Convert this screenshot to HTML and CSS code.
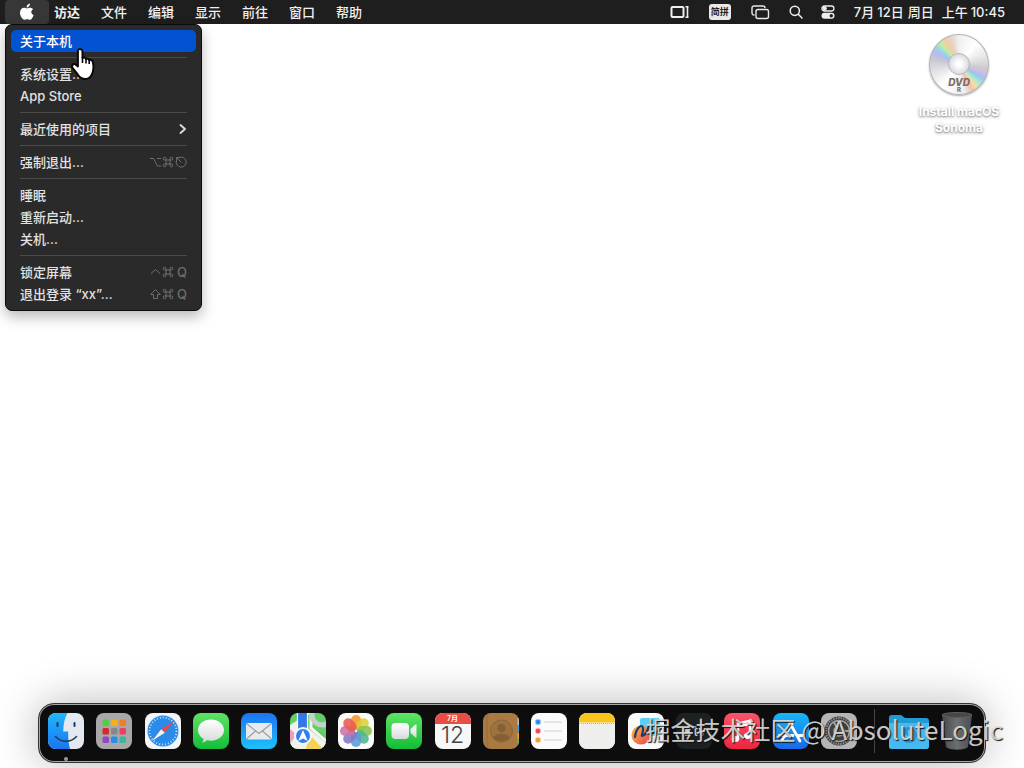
FILE: index.html
```html
<!DOCTYPE html>
<html lang="zh-CN">
<head>
<meta charset="utf-8">
<title>桌面</title>
<link rel="stylesheet" href="styles.css">
</head>
<body>
<svg class="defs" aria-hidden="true">
  <defs>
    <linearGradient id="g-blue" x1="0" y1="0" x2="0" y2="1"><stop offset="0" stop-color="#1d73f2"/><stop offset="1" stop-color="#1bc3fb"/></linearGradient>
    <linearGradient id="g-green" x1="0" y1="0" x2="0" y2="1"><stop offset="0" stop-color="#5fe365"/><stop offset="1" stop-color="#13bd37"/></linearGradient>
    <linearGradient id="g-finder" x1="0" y1="0" x2="0" y2="1"><stop offset="0" stop-color="#20b7fb"/><stop offset="1" stop-color="#1a76f2"/></linearGradient>
    <linearGradient id="g-white" x1="0" y1="0" x2="0" y2="1"><stop offset="0" stop-color="#fff"/><stop offset="1" stop-color="#d5dbd9"/></linearGradient>
    <linearGradient id="g-store" x1="0" y1="0" x2="0" y2="1"><stop offset="0" stop-color="#18b6fa"/><stop offset="1" stop-color="#1669e8"/></linearGradient>
    <linearGradient id="g-music" x1="0" y1="0" x2="0" y2="1"><stop offset="0" stop-color="#fb5368"/><stop offset="1" stop-color="#ee2540"/></linearGradient>
    <linearGradient id="g-trash" x1="0" y1="0" x2="1" y2="0"><stop offset="0" stop-color="#47494b"/><stop offset=".5" stop-color="#6c6f71"/><stop offset="1" stop-color="#4b4d50"/></linearGradient>
    <linearGradient id="g-free" x1="0" y1="0" x2="1" y2="1"><stop offset="0" stop-color="#ffba45"/><stop offset="1" stop-color="#e8434f"/></linearGradient>
    <symbol id="cmd" viewBox="0 0 12 12"><path d="M4 4h4v4H4zM4 4H2.800A1.400 1.400 0 1 1 4 2.800zM8 4V2.800A1.400 1.400 0 1 1 9.200 4zM8 8h1.200A1.400 1.400 0 1 1 8 9.200zM4 8v1.200A1.400 1.400 0 1 1 2.800 8z" fill="none" stroke="currentColor"/></symbol>
  </defs>
</svg>

<div class="screen">
  <header class="menubar">
    <nav class="menus" aria-label="菜单栏">
      <button class="apple" aria-label="苹果菜单">
        <svg width="16" height="18" viewBox="0 0 16 18" fill="#fff"><path d="M10.900 .6c.1 1.300-.4 2.200-1 2.900-.6.700-1.400 1.100-2.300 1.100-.1-1.100.4-2.100 1-2.800.6-.7 1.500-1.100 2.300-1.200zM14.100 6.200c-1.200.8-1.800 1.700-1.800 2.900 0 1.400.8 2.500 2.300 3.100-.5 1.500-1.200 2.700-2.100 3.700-.5.600-1.100.9-1.800.9-.9 0-1.400-.5-2.600-.5s-1.700.5-2.500.5c-.8 0-1.400-.4-2-1C1.900 14.100 1 12 1 9.800 1 6.700 2.900 4.800 5.100 4.800c1.200 0 2 .6 2.900.6s1.700-.7 3.100-.7c1.200 0 2.300.5 3 1.500z"/></svg>
      </button>
      <button class="menu-title active-app">访达</button>
      <button class="menu-title">文件</button>
      <button class="menu-title">编辑</button>
      <button class="menu-title">显示</button>
      <button class="menu-title">前往</button>
      <button class="menu-title">窗口</button>
      <button class="menu-title">帮助</button>
    </nav>
    <div class="status">
      <button class="status-item" aria-label="台前调度">
        <svg width="19" height="14" viewBox="0 0 19 14" fill="none" stroke="#eee" stroke-width="2"><rect x="1.500" y="2" width="12" height="10" rx="1"/><path d="M15.500 1.800h3M15.500 12.200h3" stroke-width="1.400"/><path d="M17.500 2v10" stroke-width="1.600"/></svg>
      </button>
      <button class="status-item input-source">简拼</button>
      <button class="status-item" aria-label="屏幕镜像">
        <svg width="19" height="15" viewBox="0 0 19 15" fill="none" stroke="#e8e8e8" stroke-width="1.400"><path d="M3.500 10H3a2 2 0 0 1-2-2V3a2 2 0 0 1 2-2h9a2 2 0 0 1 2 2"/><rect x="5" y="4.500" width="12.500" height="9" rx="2"/></svg>
      </button>
      <button class="status-item" aria-label="搜索">
        <svg width="14" height="14" viewBox="0 0 14 14" fill="none" stroke="#eee" stroke-width="1.500" stroke-linecap="round"><circle cx="5.800" cy="5.800" r="4.600"/><path d="M9.300 9.300l3.700 3.700"/></svg>
      </button>
      <button class="status-item" aria-label="控制中心">
        <svg width="14" height="14" viewBox="0 0 14 14" fill="none" stroke="#eee" stroke-width="1.300"><rect x=".9" y="1" width="12" height="5" rx="2.500"/><circle cx="3.700" cy="3.500" r="1.500" fill="#eee"/><rect x=".5" y="7.800" width="13" height="6" rx="3" fill="#eee" stroke="none"/><circle cx="10.300" cy="10.800" r="1.700" fill="#1e1e1e" stroke="none"/></svg>
      </button>
      <time class="clock"><span class="group"><span>7月</span><span>12日</span></span><span>周日</span><span class="group hour"><span>上午</span><span>10:45</span></span></time>
    </div>
  </header>

  <main class="desktop">
    <div class="dropdown" role="menu">
      <button class="item selected" role="menuitem">关于本机</button>
      <hr>
      <button class="item" role="menuitem">系统设置...</button>
      <button class="item" role="menuitem">App Store</button>
      <hr>
      <button class="item" role="menuitem">最近使用的项目
        <svg width="8" height="10" viewBox="0 0 8 10" fill="none" stroke="#ddd" stroke-width="1.800" stroke-linecap="round" stroke-linejoin="round"><path d="M1.500 1l4.500 4-4.500 4"/></svg>
      </button>
      <hr>
      <button class="item" role="menuitem">强制退出...
        <span class="keys">
          <svg width="11" height="12" viewBox="0 0 11 12" fill="none" stroke="currentColor"><path d="M0 2.500h3.500l4 7.500H11M7 2.500h4"/></svg>
          <svg width="12" height="12"><use href="#cmd"/></svg>
          <svg width="12" height="12" viewBox="0 0 12 12" fill="none" stroke="currentColor"><path d="M4.500 1.400a5 5 0 1 1-3 3M6.500 6.500L2 2M1.500 5V1.500H5"/></svg>
        </span>
      </button>
      <hr>
      <button class="item" role="menuitem">睡眠</button>
      <button class="item" role="menuitem">重新启动...</button>
      <button class="item" role="menuitem">关机...</button>
      <hr>
      <button class="item" role="menuitem">锁定屏幕
        <span class="keys">
          <svg width="11" height="12" viewBox="0 0 11 12" fill="none" stroke="currentColor"><path d="M1 7.500l4.500-4 4.500 4"/></svg>
          <svg width="12" height="12"><use href="#cmd"/></svg>
          <span class="key">Q</span>
        </span>
      </button>
      <button class="item" role="menuitem">退出登录 “xx”...
        <span class="keys">
          <svg width="11" height="12" viewBox="0 0 11 12" fill="none" stroke="currentColor" stroke-linejoin="round"><path d="M5.500 1.500l4.800 5H7.500v4h-4v-4H.7z"/></svg>
          <svg width="12" height="12"><use href="#cmd"/></svg>
          <span class="key">Q</span>
        </span>
      </button>
    </div>

    <svg class="pointer" width="28" height="36" viewBox="0 0 28 36" aria-hidden="true"><path d="M8.500 3.500c1.700-1.300 4 0 4 2v6.500c.8-.8 2.900-.5 3.300.9 1.100-.7 2.900-.2 3.200 1.100 1.600-.5 3.500.4 3.900 2.200 1 4.300.7 8.300-.9 12-1.200 3-3.200 4.800-6.700 4.800-3.600 0-5.800-1.500-7.600-4.600L2.300 21.500c-1-2 .8-4.200 3-3.300l2.600 2.200V5c0-.6.2-1.200.6-1.500z" fill="#fff" stroke="#080808" stroke-width="2" stroke-linejoin="round"/><path d="M12.500 11v6M16 12.500v5M19.200 14v4" stroke="#080808" stroke-width="1.600"/></svg>

    <a class="volume" href="#install">
      <span class="disc"><span class="hub"></span><span class="dvd">DVD</span><span class="dvd-r">R</span></span>
      <span class="volume-name">Install macOS Sonoma</span>
    </a>
  </main>

  <footer class="dock">
    <div class="apps">
      <button class="app running" aria-label="访达"><svg viewBox="0 0 36 36"><rect width="36" height="36" fill="#e3e8f1"/><path d="M0 0h19.500c-2.700 5-4.200 11-4.300 18.500h5c-.2 6 .3 12 1.800 17.500H0z" fill="url(#g-finder)"/><path d="M9.500 10v3M26.500 10v3" stroke="#223b54" stroke-width="2" stroke-linecap="round"/><path d="M7.500 23.500c6 6.500 15 6.500 21 0" fill="none" stroke="#223b54" stroke-width="1.600" stroke-linecap="round"/></svg></button>
      <button class="app" aria-label="启动台"><svg viewBox="0 0 36 36"><rect width="36" height="36" fill="#a9a7a8"/><g><rect x="6.500" y="6.500" width="6.500" height="6.500" rx="1.500" fill="#52ce40"/><rect x="15" y="6.500" width="6.500" height="6.500" rx="1.500" fill="#f8b015"/><rect x="23.500" y="6.500" width="6.500" height="6.500" rx="1.500" fill="#f27c20"/><rect x="6.500" y="15" width="6.500" height="6.500" rx="1.500" fill="#d52a28"/><rect x="15" y="15" width="6.500" height="6.500" rx="1.500" fill="#85878c"/><rect x="23.500" y="15" width="6.500" height="6.500" rx="1.500" fill="#f53d60"/><rect x="6.500" y="23.500" width="6.500" height="6.500" rx="1.500" fill="#9446c8"/><rect x="15" y="23.500" width="6.500" height="6.500" rx="1.500" fill="#278ee8"/><rect x="23.500" y="23.500" width="6.500" height="6.500" rx="1.500" fill="#37b899"/></g></svg></button>
      <button class="app" aria-label="Safari"><svg viewBox="0 0 36 36"><rect width="36" height="36" fill="#f3f4f6"/><circle cx="18" cy="18" r="15.500" fill="#2b8be9"/><circle cx="18" cy="18" r="13.500" fill="none" stroke="#bce2ff" stroke-width="2" stroke-dasharray="1 2"/><path d="M29 8L19.800 19.800 16.200 16.200z" fill="#ed4845"/><path d="M7 28l9.200-11.800 3.600 3.600z" fill="#f2f4f7"/></svg></button>
      <button class="app" aria-label="信息"><svg viewBox="0 0 36 36"><rect width="36" height="36" fill="url(#g-green)"/><path d="M18 6.500c7.400 0 13 4.600 13 10.600s-5.600 10.600-13 10.600c-1.400 0-2.800-.2-4-.5-1.300 1.300-2.900 2-5 2.200 1-.9 1.500-2.100 1.500-3.500C7 24 5 20.800 5 17.100 5 11.100 10.600 6.500 18 6.500z" fill="url(#g-white)"/></svg></button>
      <button class="app" aria-label="邮件"><svg viewBox="0 0 36 36"><rect width="36" height="36" fill="url(#g-blue)"/><rect x="5" y="10" width="26" height="16.500" rx="2" fill="#e8eaeb"/><path d="M6 11l12 9.500L30 11M6 25.500l8.500-7.500M30 25.500L21.500 18" fill="none" stroke="#979da3" stroke-width="1.100"/></svg></button>
      <button class="app" aria-label="地图"><svg viewBox="0 0 36 36"><rect width="36" height="36" fill="#64cf69"/><path d="M0 12l8-5v14L0 28z" fill="#f0f2e9"/><path d="M0 16l8 7-8 7z" fill="#ee9bbd"/><path d="M18 14l18 15v7H0v-6l10-12z" fill="#eff1ed"/><path d="M19 21l14 15H16z" fill="#f7d154"/><path d="M22 13l14 11v6L18 15z" fill="#57c85a"/><path d="M16 0h5v15l15 13" fill="none" stroke="#f4f5f2" stroke-width="3"/><circle cx="32" cy="2" r="10" fill="none" stroke="#c4d1c9" stroke-width="5"/><path d="M8 0h9v18H8z" fill="#3478e8"/><path d="M7.500 0v16M17.500 0v16" stroke="#fff" stroke-width="1.200"/><circle cx="13" cy="23" r="8" fill="#2f81f3" stroke="#f5f7fa" stroke-width="2"/><path d="M13 17l4.800 11-4.800-2.500L8.200 28z" fill="#fff"/></svg></button>
      <button class="app" aria-label="照片"><svg viewBox="0 0 36 36"><rect width="36" height="36" fill="#fbfbfa"/><g fill-opacity=".88"><rect x="13" y="2" width="10" height="15" rx="5" fill="#f6962b"/><rect x="13" y="2" width="10" height="15" rx="5" fill="#d9cf38" transform="rotate(45 18 18)"/><rect x="13" y="2" width="10" height="15" rx="5" fill="#8cc34f" transform="rotate(90 18 18)"/><rect x="13" y="2" width="10" height="15" rx="5" fill="#4db58d" transform="rotate(135 18 18)"/><rect x="13" y="2" width="10" height="15" rx="5" fill="#5a9bda" transform="rotate(180 18 18)"/><rect x="13" y="2" width="10" height="15" rx="5" fill="#8577c6" transform="rotate(225 18 18)"/><rect x="13" y="2" width="10" height="15" rx="5" fill="#c874aa" transform="rotate(270 18 18)"/><rect x="13" y="2" width="10" height="15" rx="5" fill="#ea5b4d" transform="rotate(315 18 18)"/></g></svg></button>
      <button class="app" aria-label="FaceTime"><svg viewBox="0 0 36 36"><rect width="36" height="36" fill="url(#g-green)"/><rect x="5.500" y="10" width="17.500" height="16" rx="4" fill="url(#g-white)"/><path d="M24.500 16l5-4.500q1-.5 1 .7v11.600q0 1.200-1 .7l-5-4.500z" fill="url(#g-white)"/></svg></button>
      <button class="app calendar" aria-label="日历"><span class="month">7月</span><span class="day">12</span></button>
      <button class="app" aria-label="通讯录"><svg viewBox="0 0 36 36"><rect width="36" height="36" fill="#a97a43"/><path d="M34.500 5H36v7h-1.500z" fill="#bec1c4"/><path d="M34.500 13H36v6h-1.500z" fill="#2aa1e4"/><path d="M34.500 20H36v6h-1.500z" fill="#f3a12a"/><path d="M34.500 27H36v6h-1.500z" fill="#57c65b"/><path d="M4 0v36" stroke="#9a6d39"/><circle cx="18.500" cy="18" r="11" fill="#9f713c" stroke="#8a6538"/><circle cx="18.500" cy="15" r="4.200" fill="#856036"/><path d="M10 24.500c3-5 14-5 17 0-4 5-13 5-17 0z" fill="#856036"/></svg></button>
      <button class="app" aria-label="提醒事项"><svg viewBox="0 0 36 36"><rect width="36" height="36" fill="#fbfbfb"/><path d="M13 9h18M13 18h18M13 27h18" stroke="#d0d0d0"/><g><circle cx="7" cy="9" r="2.800" fill="#2d8bea" stroke="#a8d1fa"/><circle cx="7" cy="18" r="2.800" fill="#eb4952" stroke="#fac0c3"/><circle cx="7" cy="27" r="2.800" fill="#ee9b32" stroke="#fbd8a8"/></g></svg></button>
      <button class="app" aria-label="备忘录"><svg viewBox="0 0 36 36"><rect width="36" height="36" fill="url(#g-white)"/><path d="M0 10h36v26H0z" fill="#eeeeec"/><path d="M0 0h36v9.500H0z" fill="#f9c51c"/><path d="M0 10.500h36" stroke="#b9b5aa" stroke-dasharray="1 1"/></svg></button>
      <button class="app" aria-label="无边记"><svg viewBox="0 0 36 36"><rect width="36" height="36" fill="#fafafa"/><rect x="12" y="5" width="20" height="18" rx="2" fill="#5dcff2"/><circle cx="13" cy="22" r="9.500" fill="url(#g-free)"/><path d="M7 24c1-9 7-14 8-9s-4 10 1 7 3-9 6-9 1 7 4 7 4-3 7-4" fill="none" stroke="#193e68" stroke-width="2.200" stroke-linecap="round"/></svg></button>
      <button class="app tv" aria-label="TV"><svg width="10" height="12" viewBox="0 0 16 18" fill="#ccc"><path d="M10.900 .6c.1 1.300-.4 2.200-1 2.900-.6.700-1.400 1.100-2.300 1.100-.1-1.100.4-2.100 1-2.800.6-.7 1.500-1.100 2.300-1.200zM14.100 6.200c-1.200.8-1.800 1.700-1.800 2.900 0 1.400.8 2.500 2.300 3.100-.5 1.500-1.200 2.700-2.100 3.700-.5.600-1.100.9-1.800.9-.9 0-1.400-.5-2.600-.5s-1.700.5-2.500.5c-.8 0-1.400-.4-2-1C1.900 14.100 1 12 1 9.800 1 6.700 2.900 4.800 5.100 4.800c1.200 0 2 .6 2.900.6s1.700-.7 3.100-.7c1.200 0 2.300.5 3 1.500z"/></svg><span>tv</span></button>
      <button class="app" aria-label="音乐"><svg viewBox="0 0 36 36"><rect width="36" height="36" fill="url(#g-music)"/><path d="M14 26V10.500l12-2.700V23M14 13.500l12-2.700" fill="none" stroke="#fff" stroke-width="2.400"/><ellipse cx="11.500" cy="26" rx="3.700" ry="3" fill="#fff"/><ellipse cx="23.500" cy="23" rx="3.700" ry="3" fill="#fff"/></svg></button>
      <button class="app" aria-label="App Store"><svg viewBox="0 0 36 36"><rect width="36" height="36" fill="url(#g-store)"/><path d="M19.500 9.500L11 24M16.500 9.500L27 28M6.500 22.500H20M25 22.500h4.500M9.800 26l-1.200 2" stroke="#fff" stroke-width="2.800" stroke-linecap="round"/></svg></button>
      <button class="app" aria-label="系统设置"><svg viewBox="0 0 36 36"><rect width="36" height="36" fill="#b4b5b4"/><circle cx="18" cy="18" r="14.500" fill="#3a3b3c"/><circle cx="18" cy="18" r="13" fill="none" stroke="#8a8b8b" stroke-width="2" stroke-dasharray="1.500 1"/><circle cx="18" cy="18" r="10.500" fill="#3e4041" stroke="#a1a2a2" stroke-width="1.500"/><circle cx="18" cy="18" r="5" fill="#535455" stroke="#a1a2a2" stroke-width="1.500"/><path d="M23 18h5.500M15.500 22.300L12.800 27M15.500 13.700L12.800 9" stroke="#a1a2a2" stroke-width="2"/></svg></button>
    </div>
    <div class="places">
      <button class="place" aria-label="下载"><svg width="42" height="38" viewBox="0 0 42 38"><path d="M1 6a3 3 0 0 1 3-3h9l4 3h21a3 3 0 0 1 3 3v25a3 3 0 0 1-3 3H4a3 3 0 0 1-3-3z" fill="#229bd4"/><path d="M1 11h40v23a3 3 0 0 1-3 3H4a3 3 0 0 1-3-3z" fill="#45b9f0"/><circle cx="21" cy="23" r="8" fill="#2d93ca"/><path d="M21 18v9M17.500 23.500L21 27l3.500-3.500" fill="none" stroke="#62c7f2" stroke-width="2"/></svg></button>
      <button class="place" aria-label="废纸篓"><svg width="32" height="40" viewBox="0 0 32 40"><path d="M1 4l4 32c3 3.500 19 3.500 22 0l4-32z" fill="url(#g-trash)"/><ellipse cx="16" cy="4" rx="15" ry="2.500" fill="#454749" stroke="#5c5f61"/></svg></button>
    </div>
  </footer>
  <p class="watermark">掘金技术社区 <span class="author">@ AbsoluteLogic</span></p>
</div>
</body>
</html>
```
FILE: styles.css
```css
* { box-sizing: border-box; }

body {
  margin: 0;
  background: #fff;
  font: 500 13px/22px Inter, "Noto Sans CJK SC", sans-serif;
  overflow: hidden;
}

button {
  margin: 0;
  padding: 0;
  border: 0;
  background: none;
  color: inherit;
  font: inherit;
}

svg { display: block; }

.defs {
  position: absolute;
  width: 0;
  height: 0;
}

.screen {
  position: relative;
  display: flex;
  flex-direction: column;
  min-height: 100vh;
}

/* Menu bar */
.menubar {
  display: flex;
  justify-content: space-between;
  height: 24px;
  padding: 0 19px 0 5px;
  background: #1e1e1e;
  color: #f0f0f0;
}

.menus { display: flex; align-items: center; gap: 21px; }
.menu-title { height: 24px; }

.apple {
  display: grid;
  place-items: center;
  width: 44px;
  height: 24px;
  margin-right: -16px;
  padding-bottom: 1px;
  border-radius: 4px;
  background: #373737;
}

.active-app { font-weight: 700; }
.status { display: flex; align-items: center; }
.status-item { margin-right: 20px; }
.status-item:nth-child(4) { margin-right: 18px; margin-left: -1px; }
.status-item:nth-child(5) { margin-right: 19px; }

.input-source {
  width: 22px;
  height: 16px;
  border-radius: 3px;
  background: #e9e9e9;
  color: #1e1e1e;
  font-size: 9px;
  font-weight: 700;
  line-height: 16px;
}

.clock { display: flex; gap: 4px; white-space: nowrap; }
.group { display: flex; gap: 3px; }
.hour { margin-left: 4px; }

/* Apple menu */
.desktop {
  position: relative;
  display: flex;
  flex: 1;
  justify-content: flex-end;
  align-items: flex-start;
}

.dropdown {
  position: absolute;
  top: 0;
  left: 5px;
  width: 197px;
  padding: 5px;
  border: 1px solid #0b0b0b;
  border-radius: 7px;
  background: #2a2a2a;
  color: #e2e2e2;
  box-shadow: 0 6px 14px rgba(0, 0, 0, .28);
}

.item {
  display: flex;
  justify-content: space-between;
  align-items: center;
  width: 100%;
  height: 22px;
  padding: 0 9px;
  border-radius: 5px;
  text-align: left;
  white-space: nowrap;
}

.selected { background: #0352d2; color: #fff; }

.dropdown hr {
  height: 1px;
  margin: 5px 9px;
  border: 0;
  background: #4b4b4b;
}

.keys { display: flex; align-items: center; gap: 1px; color: #6e6e6e; }
.key { width: 12px; text-align: right; }

.pointer {
  position: absolute;
  top: 22px;
  left: 70px;
}

/* Mounted volume */
.volume {
  display: flex;
  flex-direction: column;
  align-items: center;
  gap: 9px;
  width: 96px;
  margin: 10px 17px 0 0;
  color: #fff;
  text-decoration: none;
}

.disc {
  position: relative;
  width: 60px;
  height: 61px;
  border: 1px solid #b4b4b8;
  border-radius: 50%;
  background: conic-gradient(#f0f0f0 0deg, #fff 40deg, #e4e4e4 75deg, #ccc 98deg, #ceb9eb 110deg, #97c4f7 120deg, #a6e8cf 132deg, #f5dfa0 143deg, #f3c0ae 153deg, #eee 168deg, #fff 218deg, #e2e2e5 255deg, #c9c8d0 282deg, #b4baf2 298deg, #92dfe0 309deg, #c5eba4 319deg, #f3cda0 331deg, #e4d4cc 343deg, #f0f0f0 360deg);
  box-shadow: 0 1px 2px rgba(0, 0, 0, .35);
}

.hub {
  position: absolute;
  top: 18px;
  left: 18px;
  width: 22px;
  height: 22px;
  border: 1px solid #b5b7bb;
  border-radius: 50%;
  background: radial-gradient(#fff 15%, #e0e3e6 60%, #cfd2d5);
}

.dvd,
.dvd-r {
  position: absolute;
  right: 0;
  left: 0;
  color: #7d6c62;
  font-size: 10px;
  font-style: italic;
  font-weight: 800;
  line-height: 10px;
  text-align: center;
}

.dvd { top: 42px; }
.dvd-r { top: 52px; font-size: 6px; font-style: normal; line-height: 6px; }

.volume-name {
  font-size: 12px;
  font-weight: 700;
  line-height: 16px;
  text-align: center;
  text-shadow: 0 1px 2px rgba(0, 0, 0, .4), 0 1px 4px rgba(0, 0, 0, .25);
}

/* Dock */
.dock {
  display: flex;
  align-items: center;
  height: 60px;
  margin: 0 38px 5px;
  padding: 0 11px 4px 8px;
  border: 2px solid #a8a8a8;
  border-radius: 16px;
  outline: 1px solid #333;
  outline-offset: -1px;
  background: #0d0d0d;
  box-shadow: 0 0 44px rgba(0, 0, 0, .28);
}

.apps {
  display: flex;
  flex: 1;
  justify-content: space-between;
}

.app {
  position: relative;
  width: 36px;
  height: 36px;
}

.app > svg:first-child:last-child { border-radius: 8px; }

.running::after {
  content: "";
  position: absolute;
  bottom: -12px;
  left: 16px;
  width: 4px;
  height: 4px;
  border-radius: 50%;
  background: #9b9b9b;
}

.calendar {
  display: flex;
  flex-direction: column;
  overflow: hidden;
  border-radius: 8px;
  background: #f7f7f7;
  color: #444;
}

.month {
  width: 100%;
  background: #e94c45;
  color: #fff;
  font-size: 7px;
  font-weight: 600;
  line-height: 11px;
}

.day {
  width: 100%;
  font-size: 23px;
  font-weight: 300;
  line-height: 23px;
}

.tv {
  display: flex;
  align-items: center;
  justify-content: center;
  gap: 1px;
  border-radius: 8px;
  background: #1d2122;
  color: #ccc;
}

.places {
  display: flex;
  align-items: center;
  gap: 11px;
  height: 44px;
  margin-left: 17px;
  padding-left: 13px;
  border-left: 1px solid #454545;
}

.watermark {
  position: absolute;
  right: 21px;
  bottom: 21px;
  margin: 0;
  color: rgba(225, 225, 225, .9);
  font: 400 25px/36px "Noto Sans CJK SC", sans-serif;
  text-shadow: 1px 1px 1px #111;
  white-space: nowrap;
  pointer-events: none;
}

.author { font-size: 26px; }
```
